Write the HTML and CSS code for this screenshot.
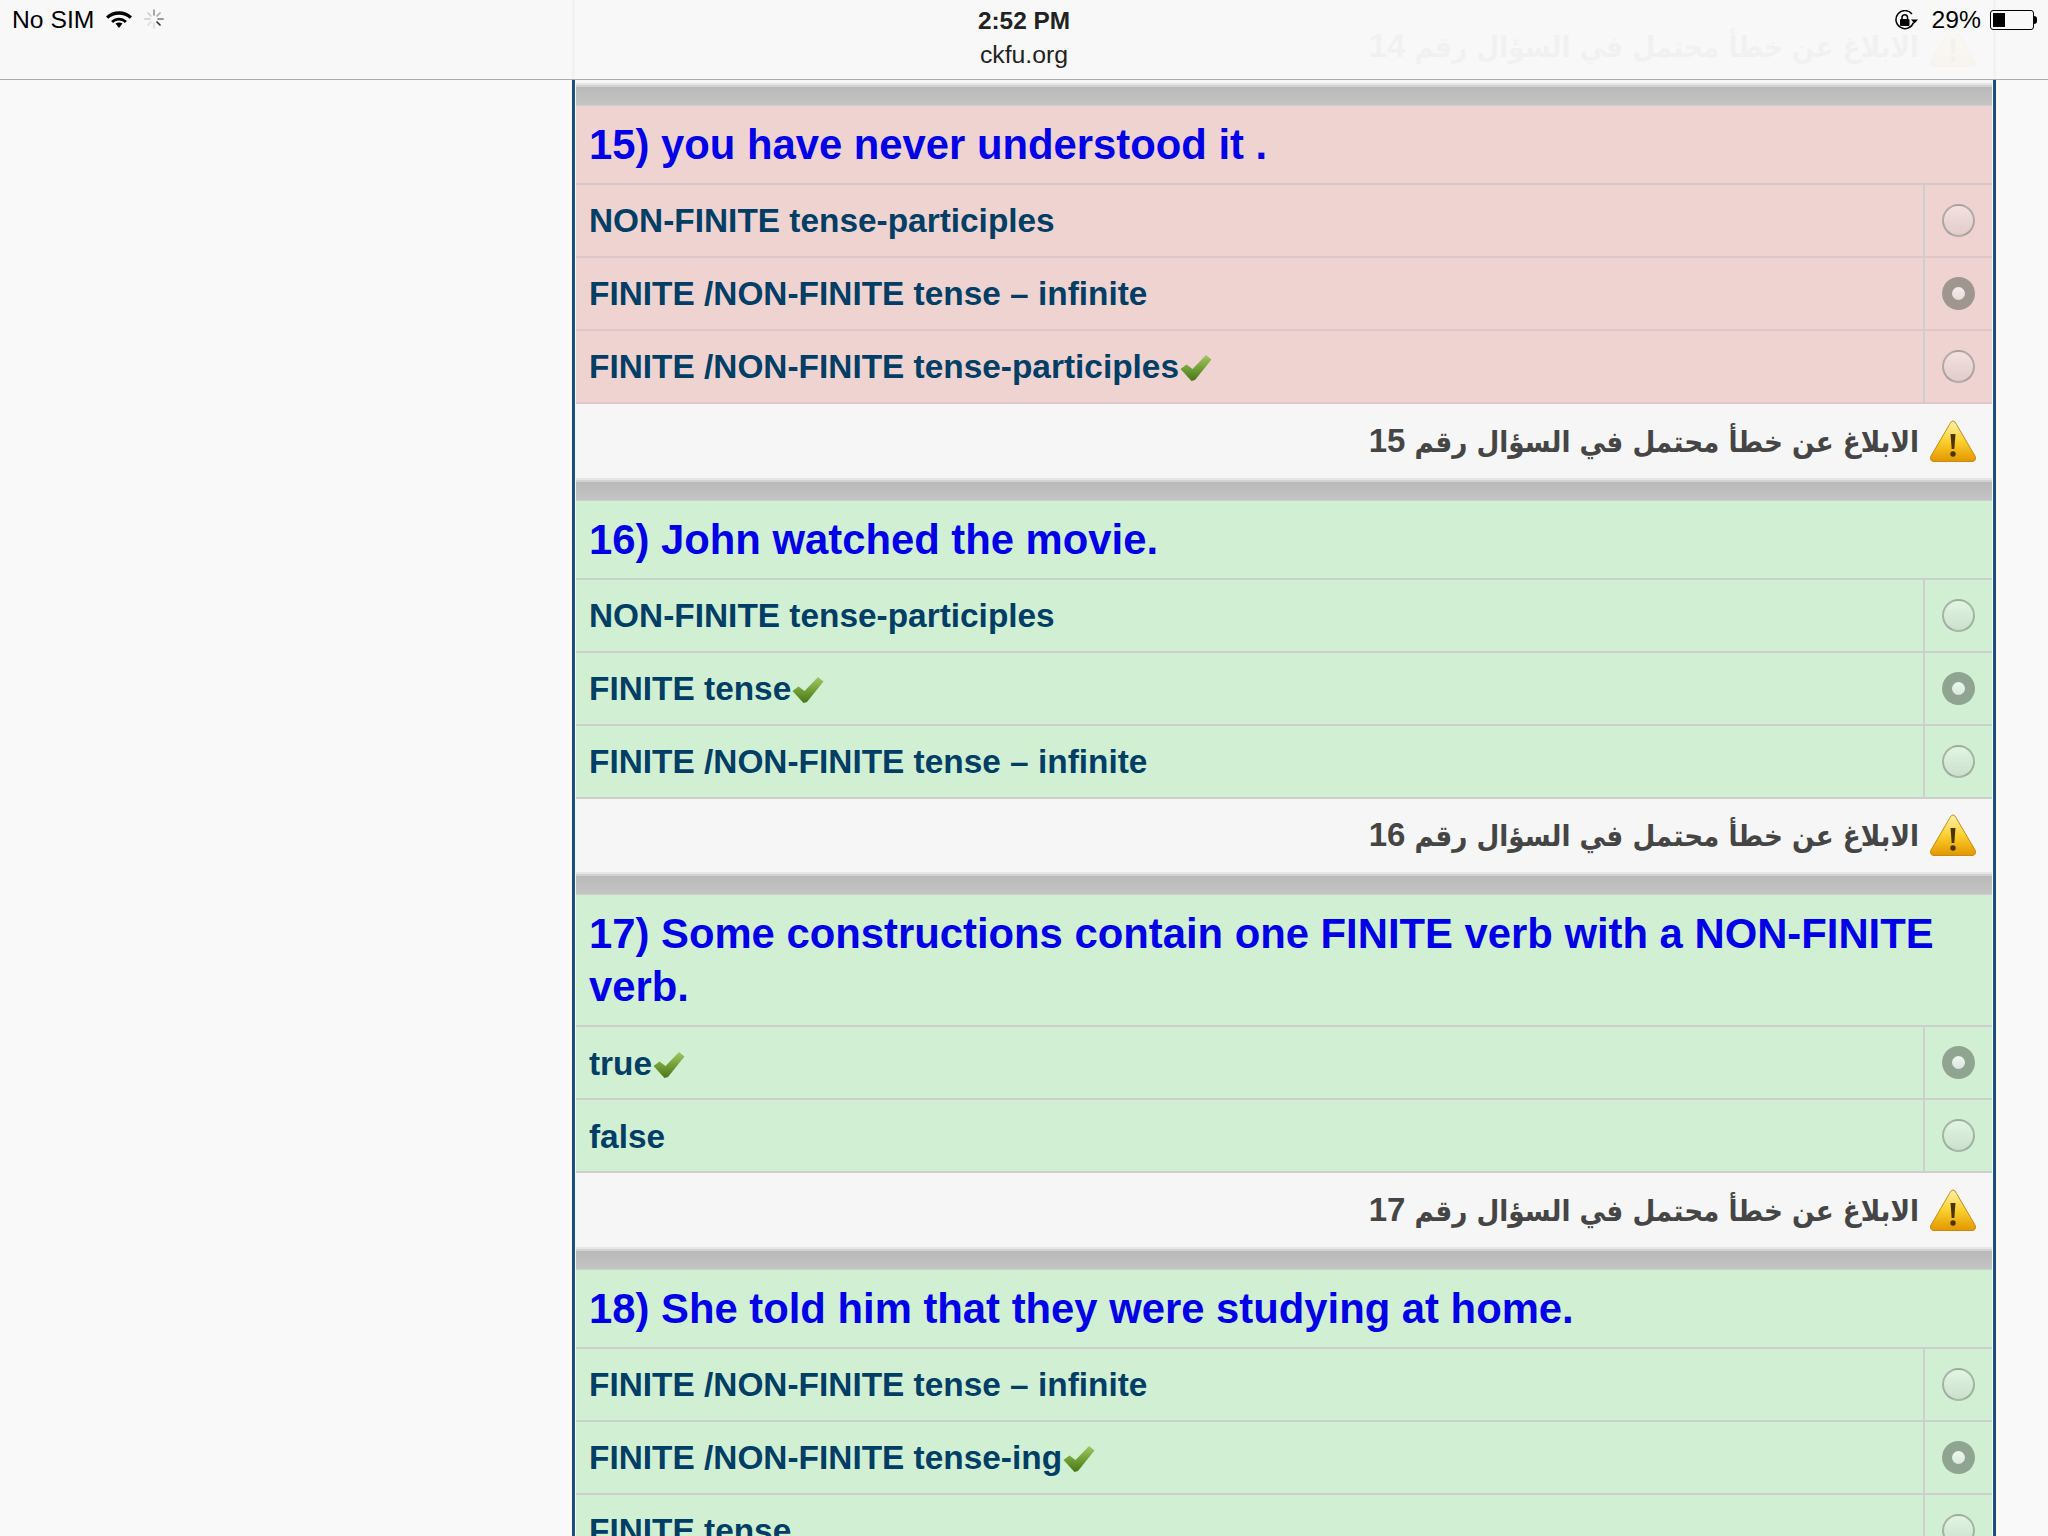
FILE: index.html
```html
<!DOCTYPE html>
<html lang="en">
<head>
<meta charset="utf-8">
<title>ckfu.org</title>
<link rel="stylesheet" href="styles.css">
</head>
<body>
<svg class="defs" width="0" height="0" aria-hidden="true">
  <defs>
    <linearGradient id="chk" x1="0" y1="0" x2="0" y2="1"><stop offset="0" stop-color="#a3c765"/><stop offset=".55" stop-color="#6f9c34"/><stop offset="1" stop-color="#4a7618"/></linearGradient>
    <linearGradient id="warn" x1="0" y1="0" x2="0" y2="1"><stop offset="0" stop-color="#fdf3b0"/><stop offset=".5" stop-color="#fbd02e"/><stop offset="1" stop-color="#e29600"/></linearGradient>
    <symbol id="check" viewBox="0 0 31 26"><path d="M0 14 6 9.500 12 14 25.500 0 31 4.500 14.500 25 11 26Z" fill="url(#chk)"/></symbol>
    <symbol id="warning" viewBox="0 0 46 42"><path d="M23 1C24.500 1 25.500 2.500 26.500 4.500L45 36C46.500 39 45 41.500 42 41.500H4C1 41.500-.5 39 1 36L19.500 4.500C20.500 2.500 21.500 1 23 1Z" fill="url(#warn)" stroke="#c98a10" stroke-width="1"/><path d="M20.500 14H25.500L24.300 29H21.700Z" fill="#4a3500"/><circle cx="23" cy="34" r="2.700" fill="#4a3500"/></symbol>
  </defs>
</svg>

<main class="sheet">
  <div class="report"><svg class="warn"><use href="#warning"/></svg><span class="report-text">الابلاغ عن خطأ محتمل في السؤال رقم <b class="num">14</b></span></div>

  <div class="sep"></div>
  <section class="q wrong">
    <h2>15) you have never understood it .</h2>
    <div class="opt"><div class="lbl">NON-FINITE tense-participles</div><div class="pick"><span class="radio"></span></div></div>
    <div class="opt"><div class="lbl">FINITE /NON-FINITE tense – infinite</div><div class="pick"><span class="radio on"></span></div></div>
    <div class="opt"><div class="lbl">FINITE /NON-FINITE tense-participles<svg class="chk"><use href="#check"/></svg></div><div class="pick"><span class="radio"></span></div></div>
  </section>
  <div class="report"><svg class="warn"><use href="#warning"/></svg><span class="report-text">الابلاغ عن خطأ محتمل في السؤال رقم <b class="num">15</b></span></div>

  <div class="sep"></div>
  <section class="q right">
    <h2>16) John watched the movie.</h2>
    <div class="opt"><div class="lbl">NON-FINITE tense-participles</div><div class="pick"><span class="radio"></span></div></div>
    <div class="opt"><div class="lbl">FINITE tense<svg class="chk"><use href="#check"/></svg></div><div class="pick"><span class="radio on"></span></div></div>
    <div class="opt"><div class="lbl">FINITE /NON-FINITE tense – infinite</div><div class="pick"><span class="radio"></span></div></div>
  </section>
  <div class="report"><svg class="warn"><use href="#warning"/></svg><span class="report-text">الابلاغ عن خطأ محتمل في السؤال رقم <b class="num">16</b></span></div>

  <div class="sep"></div>
  <section class="q right">
    <h2>17) Some constructions contain one FINITE verb with a NON-FINITE verb.</h2>
    <div class="opt"><div class="lbl">true<svg class="chk"><use href="#check"/></svg></div><div class="pick"><span class="radio on"></span></div></div>
    <div class="opt"><div class="lbl">false</div><div class="pick"><span class="radio"></span></div></div>
  </section>
  <div class="report"><svg class="warn"><use href="#warning"/></svg><span class="report-text">الابلاغ عن خطأ محتمل في السؤال رقم <b class="num">17</b></span></div>

  <div class="sep"></div>
  <section class="q right">
    <h2>18) She told him that they were studying at home.</h2>
    <div class="opt"><div class="lbl">FINITE /NON-FINITE tense – infinite</div><div class="pick"><span class="radio"></span></div></div>
    <div class="opt"><div class="lbl">FINITE /NON-FINITE tense-ing<svg class="chk"><use href="#check"/></svg></div><div class="pick"><span class="radio on"></span></div></div>
    <div class="opt"><div class="lbl">FINITE tense</div><div class="pick"><span class="radio"></span></div></div>
  </section>
</main>

<header class="bar">
  <div class="bar-side">
    <span>No SIM</span>
    <svg class="wifi" viewBox="0 0 26 18"><path d="M0 6.500C7 -.5 19 -.5 26 6.500L23.800 8.700C18 3.300 8 3.300 2.200 8.700Z"/><path d="M5 11C10 6.500 16 6.500 21 11L18.800 13C15 9.800 11 9.800 7.200 13Z"/><path d="M9.500 13.500C11.500 12 14.500 12 16.500 13.500L13 18Z"/></svg>
    <svg class="spin" viewBox="0 0 20 20"><g stroke-width="1.700" stroke-linecap="round"><path d="M10 1V6" stroke="#999"/><path d="M16 4 13 7" stroke="#aaa"/><path d="M19 10H14" stroke="#777"/><path d="M16 16 13 13" stroke="#333"/><path d="M10 19V14" stroke="#ddd"/><path d="M4 16 7 13" stroke="#ddd"/><path d="M1 10H6" stroke="#ccc"/><path d="M4 4 7 7" stroke="#ccc"/></g></svg>
  </div>
  <div class="bar-mid">
    <div class="clock">2:52 PM</div>
    <div class="url">ckfu.org</div>
  </div>
  <div class="bar-side bar-end">
    <svg class="lock" viewBox="0 0 24 20"><path d="M19.500 12.500A9 9 0 1 1 18 4" fill="none" stroke="#000" stroke-width="1.500"/><path d="M17 9.500H24L20.500 13.500Z"/><rect x="6" y="9" width="9.500" height="7" rx="1"/><path d="M8 9V7A2.800 2.800 0 0 1 13.500 7V9" fill="none" stroke="#000" stroke-width="1.500"/></svg>
    <span>29%</span>
    <span class="batt"><span class="batt-fill"></span></span><span class="batt-tip"></span>
  </div>
</header>
</body>
</html>
```
FILE: styles.css
```css
* { box-sizing: border-box; }
html, body { margin: 0; height: 1536px; overflow: hidden; }
body { background: #f9f9f9; font-family: "Liberation Sans", Arial, sans-serif; position: relative; }
.defs { position: absolute; }

.sheet {
  width: 1424px;
  margin-left: 572px;
  padding: 9.400px 1px 0;
  border-left: 3px solid #1d4f7c;
  border-right: 3px solid #1d4f7c;
}

.sep {
  height: 21px;
  border-top: 2px solid #d2d2d2;
  background: linear-gradient(#b9b9b9, #c4c4c4);
  border-bottom: 1px solid #cfcfcf;
}

.q h2 {
  margin: 0;
  padding: 12px 12px 12px 13px;
  font-size: 41.8px;
  line-height: 53px;
  font-weight: 700;
  color: #0000e6;
  border-bottom: 2px solid #cfcfcf;
}
.wrong { background: #efd3d0; }
.right { background: #d1f0d3; }
.wrong h2, .wrong .opt { border-color: #dcc8c8; }
.right h2, .right .opt { border-color: #cbd0cb; }

.opt {
  display: grid;
  grid-template-columns: 1fr 69px;
  height: 73px;
  border-bottom: 2px solid #cfcfcf;
}
.lbl {
  display: flex;
  align-items: center;
  padding: 2px 0 0 13px;
  font-size: 33.400px;
  font-weight: 700;
  color: #003e66;
}
.chk { width: 32px; height: 26px; margin-top: 2px; margin-left: 1px; }
.pick {
  display: flex;
  align-items: center;
  justify-content: center;
  border-left: 2px solid #cfcfcf;
}
.radio {
  width: 33px;
  height: 33px;
  border-radius: 50%;
  border: 2px solid rgba(90, 100, 90, .42);
  background: linear-gradient(rgba(255,255,255,.35), rgba(190,190,190,.3));
}
.radio.on {
  border: 10px solid rgba(80, 90, 80, .5);
  background: linear-gradient(rgba(255,255,255,.62), rgba(225,225,225,.6));
  background-clip: padding-box;
}

.report {
  display: flex;
  flex-direction: row-reverse;
  justify-content: flex-start;
  align-items: center;
  gap: 11px;
  height: 75.600px;
  padding-right: 16px;
  background: #f6f6f6;
  border-bottom: 2px solid #e6e6e6;
}
.report-text {
  direction: rtl;
  font-family: "DejaVu Sans Condensed", "DejaVu Sans", sans-serif;
  font-stretch: condensed;
  font-size: 29.200px;
  font-weight: 700;
  color: #454545;
}
.num { font-family: "Liberation Sans", Arial, sans-serif; font-size: 33px; }
.warn { width: 46px; height: 42px; }

.bar {
  position: absolute;
  top: 0;
  left: 0;
  width: 2048px;
  height: 80px;
  display: grid;
  grid-template-columns: 1fr auto 1fr;
  background: rgba(248, 248, 248, .965);
  border-bottom: 1px solid #a9a9a9;
  font-size: 24.700px;
  color: #000;
}
.bar-side {
  display: flex;
  align-items: center;
  gap: 12px;
  height: 40px;
  padding: 0 12px;
}
.bar-end { justify-content: flex-end; padding-right: 11px; gap: 9px; }
.bar-mid { text-align: center; }
.clock { font-weight: 700; font-size: 24.400px; line-height: 26px; margin-top: 8px; color: #222; }
.url { font-size: 24.800px; line-height: 26px; margin-top: 8px; color: #222; }
.wifi { width: 26px; height: 18px; margin-top: -3px; }
.spin { width: 20px; height: 20px; margin-left: 0; margin-top: -3px; }
.lock { width: 24px; height: 20px; margin-right: 5px; }
.batt {
  display: block;
  width: 44px;
  height: 20px;
  padding: 2px;
  border: 1px solid #000;
  border-radius: 3px;
}
.batt-fill { display: block; width: 12px; height: 100%; background: #000; }
.batt-tip { width: 3px; height: 8px; margin-left: -9px; background: #000; border-radius: 0 3px 3px 0; }
```
